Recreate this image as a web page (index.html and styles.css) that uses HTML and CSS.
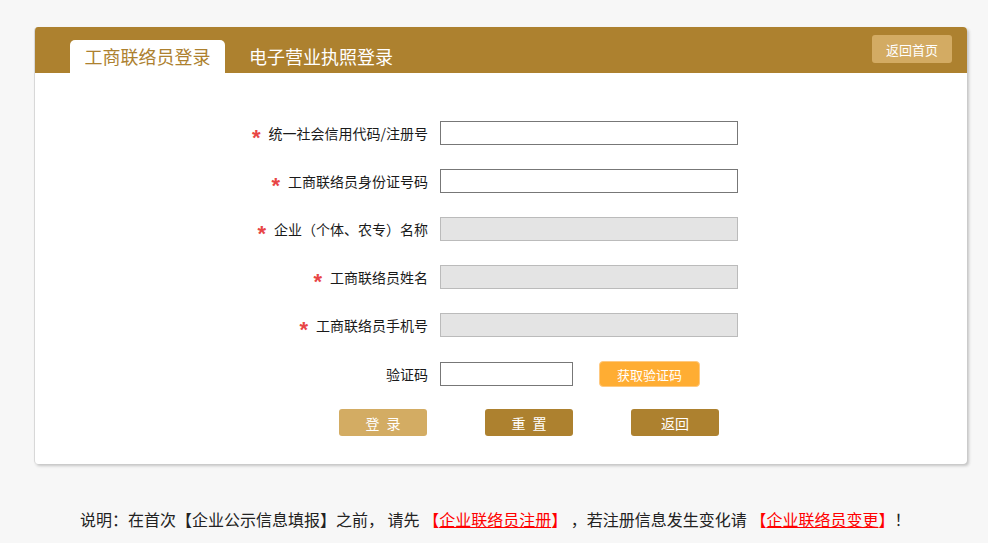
FILE: index.html
```html
<!DOCTYPE html>
<html lang="zh-CN">
<head>
<meta charset="utf-8">
<title>工商联络员登录</title>
<link rel="stylesheet" href="styles.css">
</head>
<body>
<div class="card">
  <div class="card-head">
    <div class="tabs">
      <div class="tab active">工商联络员登录</div>
      <div class="tab">电子营业执照登录</div>
    </div>
    <button class="home-btn">返回首页</button>
  </div>
  <form class="form">
    <div class="row">
      <label class="label"><span class="star">*</span>统一社会信用代码/注册号</label>
      <input class="field" type="text">
    </div>
    <div class="row">
      <label class="label"><span class="star">*</span>工商联络员身份证号码</label>
      <input class="field" type="text">
    </div>
    <div class="row">
      <label class="label"><span class="star">*</span>企业（个体、农专）名称</label>
      <input class="field disabled" type="text" disabled>
    </div>
    <div class="row">
      <label class="label"><span class="star">*</span>工商联络员姓名</label>
      <input class="field disabled" type="text" disabled>
    </div>
    <div class="row">
      <label class="label"><span class="star">*</span>工商联络员手机号</label>
      <input class="field disabled" type="text" disabled>
    </div>
    <div class="row">
      <label class="label">验证码</label>
      <div class="captcha">
        <input class="field short" type="text">
        <button type="button" class="code-btn">获取验证码</button>
      </div>
    </div>
    <div class="actions">
      <button type="button" class="btn light">登&nbsp;录</button>
      <button type="button" class="btn dark">重&nbsp;置</button>
      <button type="button" class="btn dark">返回</button>
    </div>
  </form>
</div>
<p class="note">说明：在首次【企业公示信息填报】之前， 请先 <span class="red">【<u>企业联络员注册</u>】</span> ，若注册信息发生变化请 <span class="red">【<u>企业联络员变更</u>】</span>！</p>
</body>
</html>
```
FILE: styles.css
```css
* { box-sizing: border-box; }
body {
  margin: 0;
  background: #f7f7f7;
  font-family: "Noto Sans CJK SC", "Noto Sans", sans-serif;
  color: #222;
}
.card {
  margin: 27px 0 0 34px;
  width: 933px;
  height: 437px;
  background: #fff;
  border-radius: 4px;
  border-left: 1px solid #d8d8d8;
  box-shadow: 2px 2px 3px #c4c4c4;
  overflow: hidden;
}
.card-head {
  height: 46px;
  background: #ad812f;
  display: flex;
  justify-content: space-between;
  align-items: flex-start;
  padding: 0 15px 0 35px;
}
.tabs {
  display: flex;
  align-items: flex-end;
  height: 46px;
}
.tab {
  height: 33px;
  font-size: 18px;
  line-height: 33px;
  color: #fff;
  padding-left: 24px;
}
.tab.active {
  width: 155px;
  padding-left: 0;
  text-align: center;
  background: #fff;
  color: #ad812f;
  border-radius: 5px 5px 0 0;
}
.home-btn {
  margin-top: 8px;
  width: 80px;
  height: 28px;
  border: none;
  border-radius: 3px;
  background: #d3ab63;
  color: #fff;
  font-family: inherit;
  font-size: 13px;
  padding: 0;
}
.form {
  padding-top: 48px;
}
.row {
  display: grid;
  grid-template-columns: 393px 1fr;
  column-gap: 12px;
  align-items: center;
  height: 24px;
  margin-bottom: 24px;
}
.label {
  text-align: right;
  font-size: 14px;
  line-height: 24px;
  color: #1a1a1a;
}
.star {
  display: inline-block;
  color: #e84545;
  font-family: "Liberation Sans", sans-serif;
  font-weight: bold;
  font-size: 22px;
  line-height: 10px;
  margin-right: 8px;
  position: relative;
  top: 6px;
}
.field {
  width: 298px;
  height: 24px;
  border: 1px solid #777;
  background: #fff;
  margin: 0;
  padding: 0 4px;
}
.field.disabled {
  background: #e4e4e4;
  border-color: #bbb;
}
.field.short { width: 133px; }
.captcha {
  display: flex;
  align-items: center;
  gap: 26px;
}
.code-btn {
  width: 101px;
  height: 26px;
  border: 1px solid #ffc980;
  border-radius: 4px;
  background: #ffad33;
  color: #fff;
  font-family: inherit;
  font-size: 13px;
  padding: 0;
}
.actions {
  display: flex;
  gap: 58px;
  padding-left: 304px;
  margin-top: 3px;
}
.btn {
  width: 88px;
  height: 27px;
  border: none;
  border-radius: 3px;
  color: #fff;
  font-family: inherit;
  font-size: 14px;
  padding: 0;
  word-spacing: 4px;
}
.btn.light { background: #d3ac63; }
.btn.dark { background: #ad812f; }
.note {
  margin: 43px 0 0 80px;
  font-size: 16px;
  line-height: 24px;
  color: #222;
}
.red { color: #f00; }
.red u { text-decoration: underline; }
```
